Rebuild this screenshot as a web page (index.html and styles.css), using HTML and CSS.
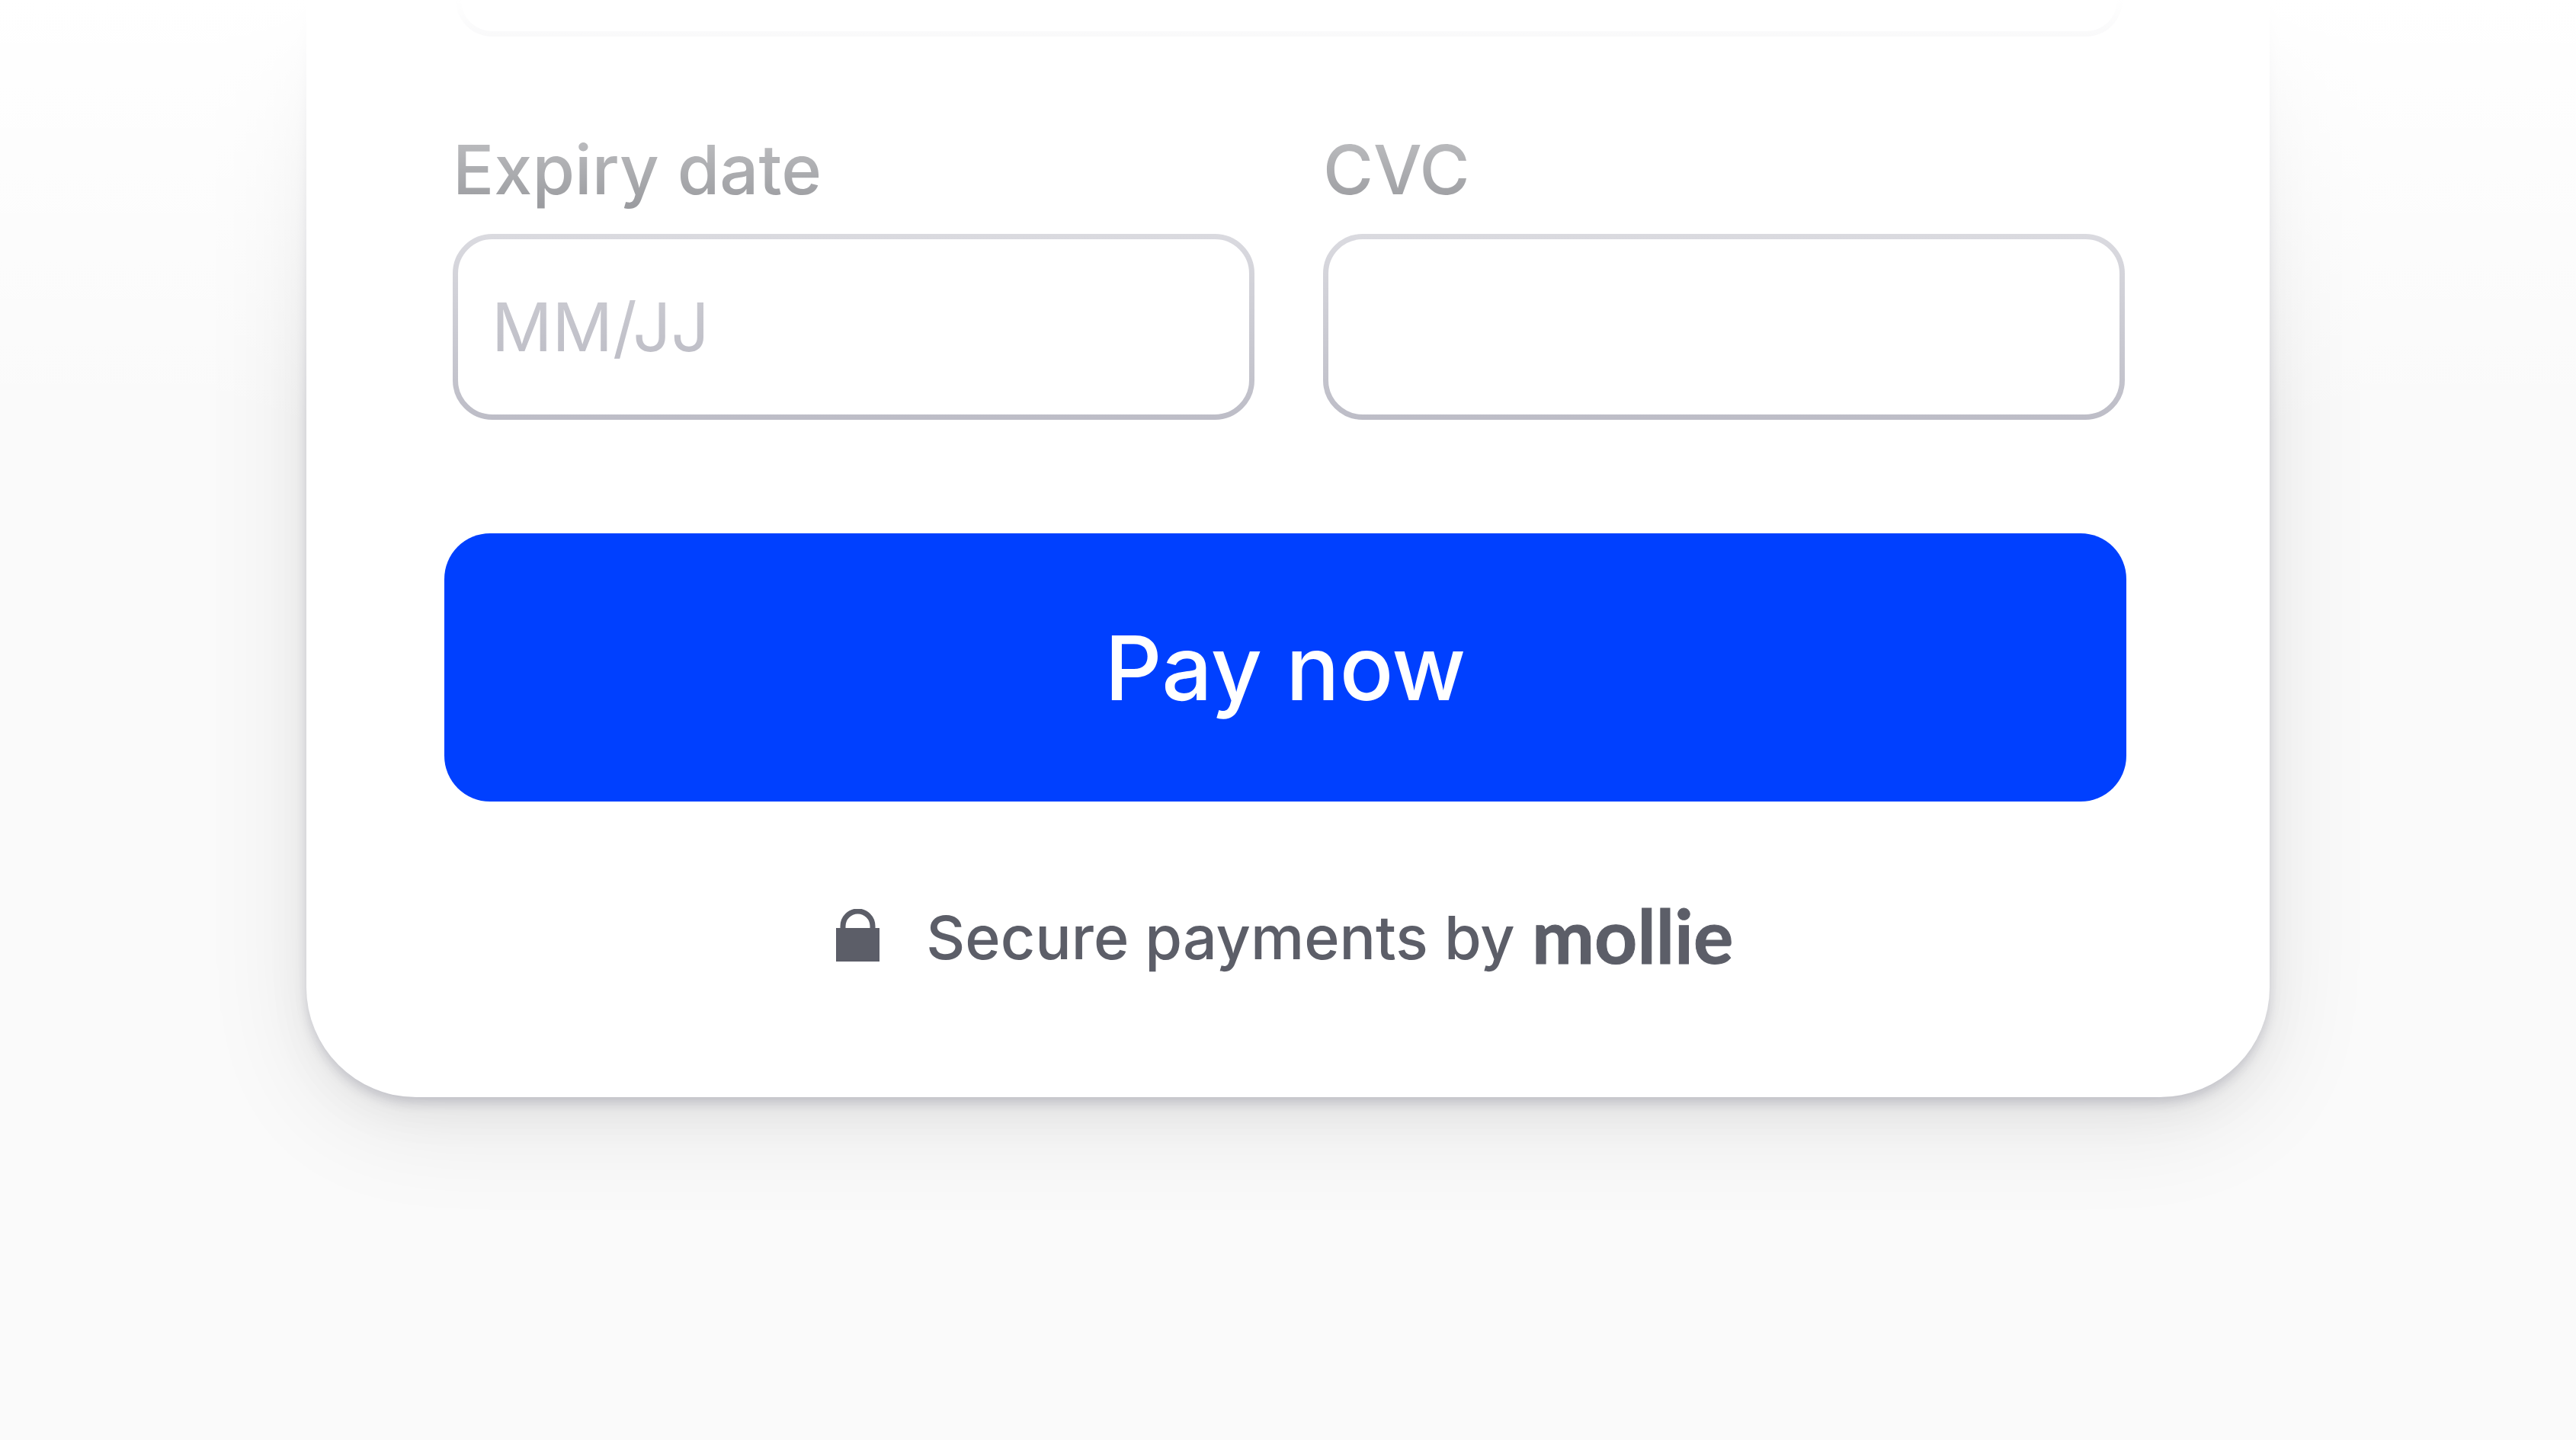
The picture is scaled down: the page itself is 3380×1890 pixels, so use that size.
FILE: index.html
```html
<!DOCTYPE html>
<html lang="en">
<head>
    <meta charset="utf-8">
    <meta name="viewport" content="width=device-width, initial-scale=1">
    <title>Checkout</title>
    <link rel="stylesheet" href="styles.css">
</head>
<body>
    <form class="card">
        <input type="text" class="card-number" id="card-number" aria-label="Card number">

        <div class="form-row">
            <div class="form-group">
                <label for="expiry">Expiry date</label>
                <input type="text" id="expiry" placeholder="MM/JJ">
            </div>
            <div class="form-group">
                <label for="cvc">CVC</label>
                <input type="text" id="cvc">
            </div>
        </div>

        <button type="button" class="pay-button">Pay now</button>

        <div class="secure">
            <svg class="lock" viewBox="0 0 58 74" aria-hidden="true">
                <path d="M9 26V22.500a19.500 19.500 0 0 1 39 0V26" fill="none" stroke="currentColor" stroke-width="7"/>
                <rect y="25" width="57" height="44" fill="currentColor"/>
            </svg>
            <span class="secure-text">Secure payments by</span>
            <svg class="logo" viewBox="0 0 266 120">
                <text class="logo-text" x="0" y="95">mollie</text>
            </svg>
        </div>
    </form>
</body>
</html>
```
FILE: styles.css
```css
body {
    margin: 0;
    padding: 0 402px;
    min-height: 100vh;
    box-sizing: border-box;
    background: #fafafa;
    font-family: Inter, "Liberation Sans", sans-serif;
}
/* fades the top of the page to white */
body::before {
    content: "";
    position: absolute;
    top: 0;
    left: 0;
    right: 0;
    height: 560px;
    background: linear-gradient(#fff, rgba(255,255,255,0));
    pointer-events: none;
    z-index: 1;
}
.card {
    background: white;
    border-radius: 0 0 144px 144px;
    box-shadow: 0 8px 14px rgba(40,40,80,0.17), 0 20px 60px rgba(0,0,0,0.05), 0 30px 144px rgba(0,0,0,0.09);
    padding: 0 188px 150px 181px;
}
input[type="text"] {
    display: block;
    width: 100%;
    height: 244px;
    padding: 0 44px;
    border: 7px solid #bcbcc6;
    border-radius: 52px;
    box-sizing: border-box;
    background: white;
    color: #30323a;
    font-family: inherit;
    font-size: 88px;
    font-weight: 400;
}
input[type="text"]::placeholder {
    color: #b2b2bc;
    opacity: 1;
}
input[type="text"].card-number {
    width: calc(100% - 20px);
    height: 48px;
    margin-left: 15px;
    border-top: none;
    border-radius: 0 0 52px 52px;
}
.form-row {
    display: flex;
    gap: 90px;
    margin: 121px 2px 149px 11px;
}
.form-group {
    flex: 1;
}
label {
    display: block;
    margin-bottom: 30px;
    color: #30323a;
    font-size: 90px;
    font-weight: 500;
    line-height: 108px;
}
.pay-button {
    display: block;
    width: 100%;
    height: 352px;
    padding: 0;
    background: #0040ff;
    color: white;
    border: none;
    border-radius: 60px;
    cursor: pointer;
    font-family: inherit;
    font-size: 117px;
    font-weight: 500;
}
.secure {
    display: flex;
    justify-content: center;
    align-items: center;
    margin-top: 118px;
    color: #5c5e68;
}
.secure-text {
    margin: 0 22px 0 60px;
    font-size: 79px;
    font-weight: 500;
    line-height: 96px;
}
.lock {
    width: 58px;
    height: 74px;
}
.logo {
    width: 266px;
    height: 120px;
    overflow: visible;
}
.logo-text {
    fill: currentColor;
    stroke: currentColor;
    stroke-width: 1px;
    font-family: Lato, sans-serif;
    font-size: 98px;
    font-weight: 700;
}
```
